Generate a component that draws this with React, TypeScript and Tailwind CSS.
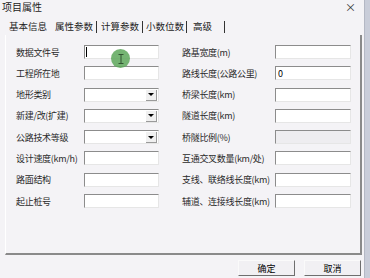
import React from "react";

const font = { fontFamily: '"Noto Sans CJK SC", "Noto Sans", sans-serif' };

type Field = { label: string; kind?: "text" | "select" | "disabled"; value?: string };

const left: Field[] = [
  { label: "数据文件号", kind: "text", value: "caret" },
  { label: "工程所在地" },
  { label: "地形类别", kind: "select" },
  { label: "新建/改(扩建)", kind: "select" },
  { label: "公路技术等级", kind: "select" },
  { label: "设计速度(km/h)" },
  { label: "路面结构" },
  { label: "起止桩号" },
];

const right: Field[] = [
  { label: "路基宽度(m)" },
  { label: "路线长度(公路公里)", value: "0" },
  { label: "桥梁长度(km)" },
  { label: "隧道长度(km)" },
  { label: "桥隧比例(%)", kind: "disabled" },
  { label: "互通交叉数量(km/处)" },
  { label: "支线、联络线长度(km)" },
  { label: "辅道、连接线长度(km)" },
];

function Input({ f, w }: { f: Field; w: string }) {
  const disabled = f.kind === "disabled";
  return (
    <div
      className={
        "relative h-[14px] flex items-center border-t border-l border-t-[#8c8c8c] border-l-[#8c8c8c] border-b border-r border-b-[#e6e6e6] border-r-[#e6e6e6] " +
        w +
        (disabled ? " bg-[#eeedf0]" : " bg-white")
      }
    >
      {f.value === "caret" && <div className="ml-[1px] w-px h-[10px] bg-black" />}
      {f.value && f.value !== "caret" && (
        <span className="ml-[2px] text-[9px] leading-none text-black">{f.value}</span>
      )}
      {f.kind === "select" && (
        <div className="absolute right-[1px] top-[1px] w-[11px] h-[11px] bg-[#f0f0f0] border-r border-b border-[#9a9a9a] flex items-center justify-center">
          <div className="w-0 h-0 border-l-[3px] border-r-[3px] border-t-[3px] border-l-transparent border-r-transparent border-t-black" />
        </div>
      )}
    </div>
  );
}

function Row({ l, r }: { l: Field; r: Field }) {
  return (
    <div className="flex items-center h-[14px] text-[9px] leading-none text-[#2a2a2a]">
      <div className="w-[68px] tracking-[-0.3px] whitespace-nowrap">{l.label}</div>
      <Input f={l} w="w-[75px]" />
      <div className="ml-[23px] w-[93px] tracking-[-0.3px] whitespace-nowrap">{r.label}</div>
      <Input f={r} w="w-[76px]" />
    </div>
  );
}

function Button({ children }: { children: React.ReactNode }) {
  return (
    <div className="w-[57px] h-[16px] flex items-center justify-center bg-[#f1f0f3] border border-t-[#fafafa] border-l-[#fafafa] border-b-[#6e6e6e] border-r-[#6e6e6e] text-[9px] leading-none text-black">
      {children}
    </div>
  );
}

export default function App() {
  return (
    <div className="w-[370px] h-[278px] flex overflow-hidden bg-[#f4f3f6]" style={font}>
      <div className="relative w-[364px] h-full flex flex-col">
        {/* title */}
        <div className="h-[14px] flex items-center justify-between pl-[2px] pr-[8px]">
          <span className="text-[10px] leading-[12px] text-[#222]">项目属性</span>
          <span className="text-[11px] leading-[14px] text-[#333]">×</span>
        </div>

        {/* tabs */}
        <div className="mt-[5px] h-[16px] flex items-center pl-[9px] text-[9.5px] leading-none text-[#222]">
          <span className="mr-[8px]">基本信息</span>
          <span>属性参数</span>
          <div className="ml-[3px] mr-[4px] w-px h-[12px] bg-[#333]" />
          <span>计算参数</span>
          <div className="mx-[3px] w-px h-[12px] bg-[#333]" />
          <span>小数位数</span>
          <div className="ml-[2px] mr-[6px] w-px h-[12px] bg-[#333]" />
          <span>高级</span>
          <div className="ml-[12px] w-px h-[12px] bg-[#333]" />
        </div>

        {/* panel */}
        <div className="ml-[5px] w-[357px] h-[220px] border-l border-l-[#ffffff] border-r-2 border-b-2 border-r-[#8a8a8a] border-b-[#8a8a8a]">
          <div className="pt-[10px] pl-[10px] flex flex-col gap-[7.3px]">
            {left.map((l, i) => (
              <Row key={i} l={l} r={right[i]} />
            ))}
          </div>
        </div>

        {/* buttons */}
        <div className="flex justify-end gap-[9px] pr-[3px] mt-[5px]">
          <Button>确定</Button>
          <Button>取消</Button>
        </div>

        {/* mouse highlight */}
        <div className="absolute left-[111px] top-[49px] w-[19px] h-[19px] rounded-full bg-[#5da75a]/85 flex items-center justify-center">
          <svg width="6" height="10" viewBox="0 0 6 10">
            <path d="M0.5 0.5h5M3 0.5v9M0.5 9.5h5" stroke="#335533" strokeWidth="1" fill="none" />
          </svg>
        </div>
      </div>
      <div className="w-[6px] h-full bg-[#c9cdd9] border-l border-[#b4b8c4]" />
    </div>
  );
}
